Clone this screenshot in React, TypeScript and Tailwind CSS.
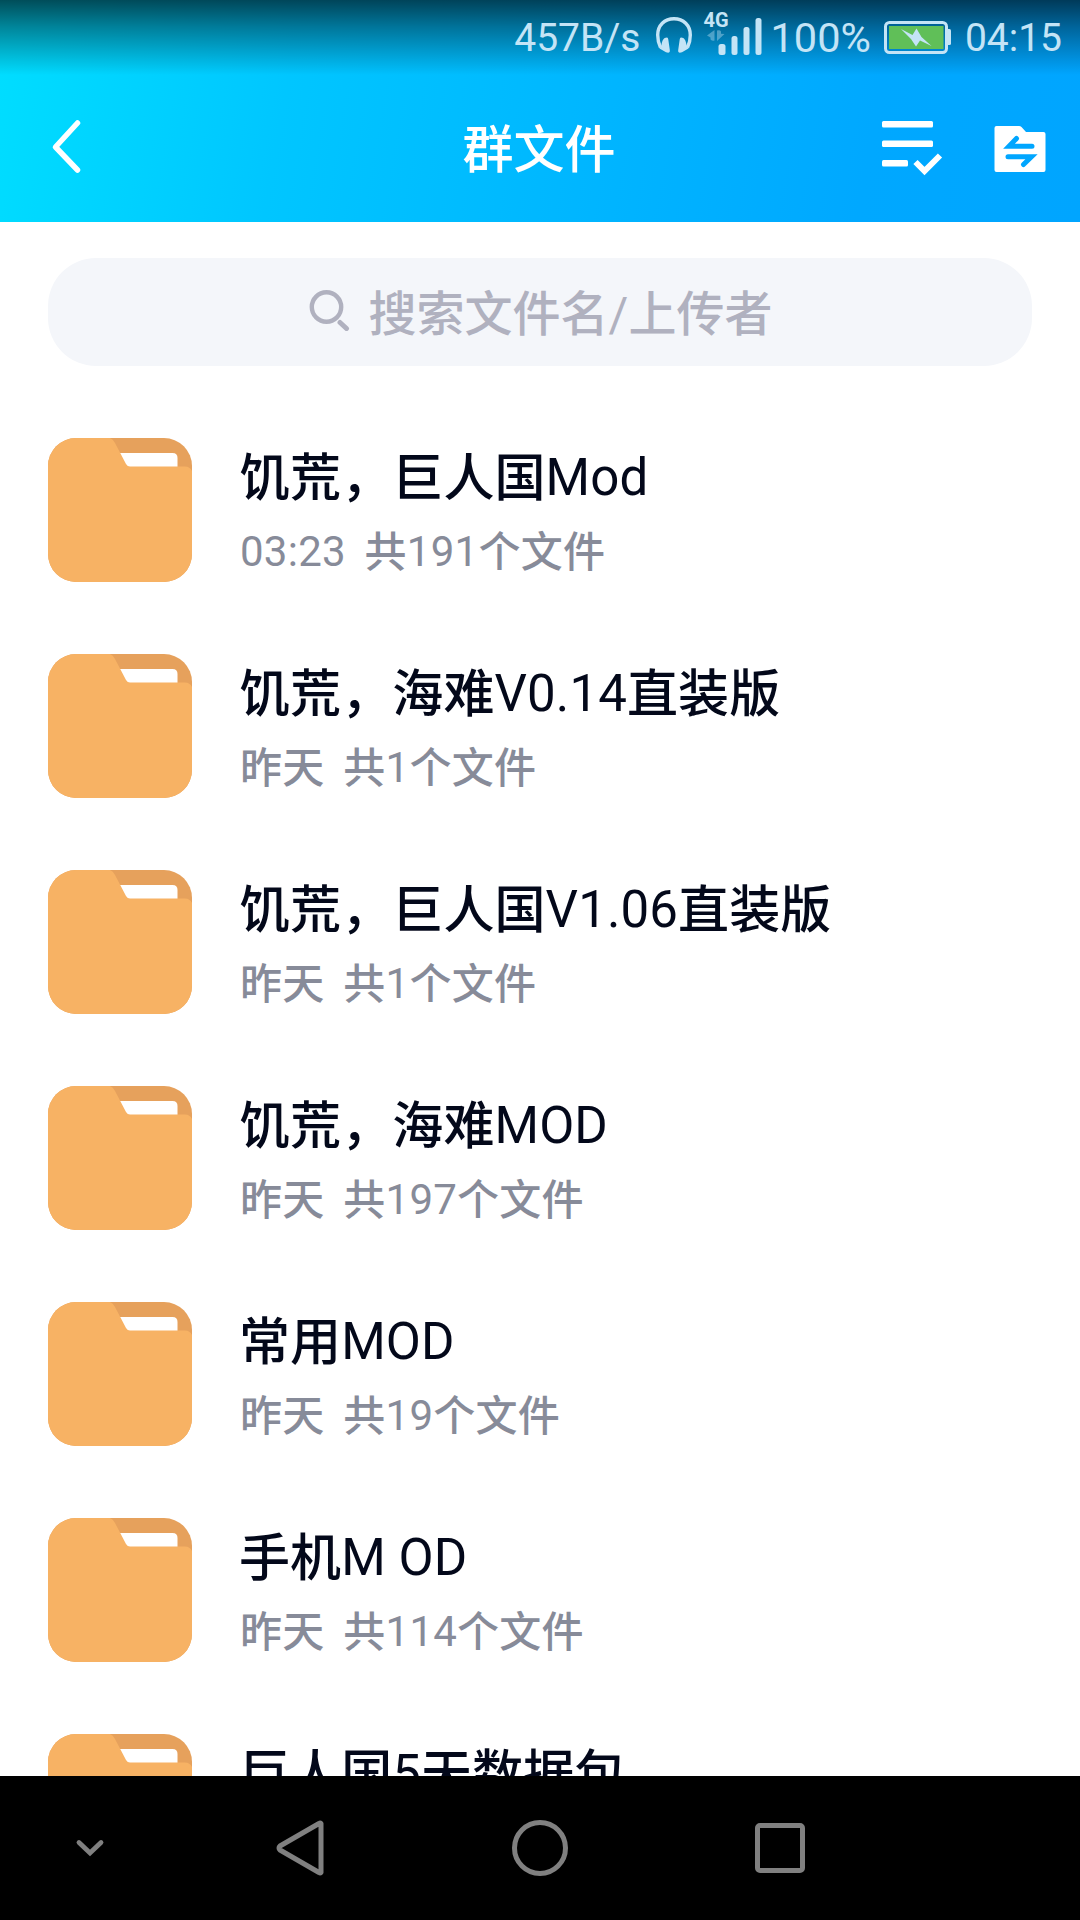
import React from "react";

type FolderEntry = { name: string; date: string; count?: number };

const folders: FolderEntry[] = [
  { name: "饥荒，巨人国Mod", date: "03:23", count: 191 },
  { name: "饥荒，海难V0.14直装版", date: "昨天", count: 1 },
  { name: "饥荒，巨人国V1.06直装版", date: "昨天", count: 1 },
  { name: "饥荒，海难MOD", date: "昨天", count: 197 },
  { name: "常用MOD", date: "昨天", count: 19 },
  { name: "手机M OD", date: "昨天", count: 114 },
  { name: "巨人国5天数据包", date: "昨天" },
];

function Headphones() {
  return (
    <svg width="38" height="38" viewBox="0 0 38 38" className="ml-[14px] mt-[16px] shrink-0">
      <path d="M5.500 31.500C3.500 27.500 2.700 23.500 2.700 19C2.700 9.500 9.500 2.700 19 2.700S35.300 9.500 35.300 19C35.300 23.500 34.500 27.500 32.500 31.500" fill="none" stroke="currentColor" strokeWidth="3.400" />
      <path d="M12 21.500C8.500 21.500 7 25 6.500 29L4.500 32.500L11 36.300Q15.300 37.800 14.800 34L13.300 23.500Q13 21.500 12 21.500z" fill="currentColor" />
      <path d="M26 21.500C29.500 21.500 31 25 31.500 29L33.500 32.500L27 36.300Q22.700 37.800 23.200 34L24.700 23.500Q25 21.500 26 21.500z" fill="currentColor" />
    </svg>
  );
}

function Signal() {
  return (
    <div className="relative ml-[11px] h-[60px] w-[60px] shrink-0">
      <span className="absolute left-0 top-[10px] text-[20px] font-bold leading-[20px]">4G</span>
      <svg width="60" height="60" viewBox="0 0 60 60" className="absolute left-0 top-0">
        <g fill="currentColor">
          <rect x="14.500" y="44" width="7" height="11" rx="2.500" />
          <rect x="27.500" y="36" width="6" height="19" rx="2.500" />
          <rect x="39.500" y="27" width="6" height="28" rx="2.500" />
          <rect x="51.500" y="18" width="6" height="37" rx="2.500" />
          <path opacity=".4" d="M10.500 30v10.500q-2 1-4-1v-2L3 35.500zM13 41V30.500q3-1 4 1v2.300l3.500.2z" />
        </g>
      </svg>
    </div>
  );
}

function Battery() {
  return (
    <svg width="68" height="34" viewBox="0 0 68 34" className="ml-[13px] mt-[21px] shrink-0">
      <rect x="1.500" y="1.500" width="61" height="30" rx="4" fill="none" stroke="currentColor" strokeWidth="3" />
      <rect x="5" y="5" width="54.500" height="23" fill="#60bf58" />
      <path d="M64 8h1.500a1.500 1.500 0 0 1 1.500 1.500v13a1.500 1.500 0 0 1-1.500 1.500H64z" fill="currentColor" />
      <path d="M17 8L28.500 14L32.500 7.500L37.500 16L47.500 25L36 19.500L32 25.500L27 18z" fill="currentColor" />
    </svg>
  );
}

function StatusBar() {
  return (
    <div className="flex h-[75px] items-start justify-end bg-linear-to-b from-black/65 via-black/40 via-35% to-transparent pr-[18px] text-[39px] leading-[76px] text-[#c4e4f6]">
      <span>457B/s</span>
      <Headphones />
      <Signal />
      <span className="ml-[7px] text-[41.5px]">100%</span>
      <Battery />
      <span className="ml-[13px]">04:15</span>
    </div>
  );
}

function TitleBar() {
  return (
    <div className="grid h-[147px] grid-cols-3 items-center text-white">
      <svg width="32" height="62" viewBox="0 0 32 62" className="ml-[50px]">
        <path d="M27.500 5L5.500 29L27.500 52" fill="none" stroke="currentColor" strokeWidth="5.500" strokeLinecap="round" strokeLinejoin="round" />
      </svg>
      <h1 className="-ml-[2px] pt-[5px] text-center text-[51px] font-medium leading-[60px]">群文件</h1>
      <div className="flex items-center justify-end gap-[50px] pr-[34px]">
        <svg width="64" height="60" viewBox="0 0 64 60">
          <g fill="currentColor">
            <rect x="2" y="2" width="51" height="6.500" rx="1.500" />
            <rect x="2" y="21.500" width="51" height="6.500" rx="1.500" />
            <rect x="2" y="41" width="26" height="6.500" rx="1.500" />
          </g>
          <path d="M35.500 43L44.500 52L60 36.500" fill="none" stroke="currentColor" strokeWidth="6" />
        </svg>
        <svg width="52" height="48" viewBox="0 0 52 48">
          <path d="M2.500 1H25q1.500 0 2.500 1l4.500 5H49.500q2 0 2 2V45q0 2-2 2H2.500q-2 0-2-2V3q0-2 2-2z" fill="currentColor" />
          <path d="M38 21.300H15L22.500 13.500M14 31.700H37.500L29.500 39.500" fill="none" stroke="#00a6ff" strokeWidth="5" strokeLinecap="round" />
        </svg>
      </div>
    </div>
  );
}

function SearchBox() {
  return (
    <div className="mx-12 mt-9 flex h-[108px] shrink-0 items-center justify-center rounded-[48px] bg-[#f4f6fa] text-[48px] leading-[60px] text-[#b0b1bf]">
      <svg width="42" height="42" viewBox="0 0 42 42" className="mb-[4px] mr-[19px]">
        <circle cx="18.500" cy="18" r="14.700" fill="none" stroke="currentColor" strokeWidth="4.400" />
        <path d="M32 33.500L38.500 39.500" stroke="currentColor" strokeWidth="5" strokeLinecap="round" />
      </svg>
      <span className="pt-[5px] font-medium">
        搜索文件名<span className="font-normal">/</span>上传者
      </span>
    </div>
  );
}

function FolderIcon() {
  return (
    <svg width="144" height="144" viewBox="0 0 144 144" className="shrink-0 rounded-[28px]">
      <rect width="144" height="144" fill="#e6a15c" />
      <path d="M71 15H124.500Q129.500 15 129.500 20V30H71z" fill="#fff" />
      <path d="M0 0H62Q65 1 67 5L78 26Q79.500 28.500 82 28.500H137Q142 28.500 144 33V144H0z" fill="#f7b264" />
    </svg>
  );
}

/* Chinese runs are set in medium weight and sit slightly below the Latin baseline. */
function MixedText({ text }: { text: string }) {
  return (
    <>
      {text.split(/([A-Za-z0-9.: ]+)/).map((part, i) =>
        i % 2 ? (
          <span key={i} className="font-normal">{part}</span>
        ) : (
          <span key={i} className="align-[-1px] font-medium">{part}</span>
        ),
      )}
    </>
  );
}

function FolderRow({ folder }: { folder: FolderEntry }) {
  return (
    <li className="flex h-[216px] shrink-0 items-center gap-[47px] px-12">
      <FolderIcon />
      <div className="h-[144px] whitespace-pre">
        <p className="mt-[8px] h-[64px] text-[51px] leading-[64px] tracking-[0.1px] text-[#03081a]">
          <MixedText text={folder.name} />
        </p>
        <p className="ml-px mt-[14px] h-[56px] text-[42px] leading-[56px] tracking-[0.25px] text-[#878b99] [word-spacing:-1.3px]">
          <MixedText text={folder.count ? `${folder.date}  共${folder.count}个文件` : folder.date} />
        </p>
      </div>
    </li>
  );
}

function NavigationBar() {
  return (
    <nav className="flex h-[144px] shrink-0 items-center bg-black text-[#808080]">
      <svg width="30" height="20" viewBox="0 0 30 20" className="ml-[75px]">
        <path d="M4 4.500L15 15L26 4.500" fill="none" stroke="currentColor" strokeWidth="4.800" strokeLinecap="round" />
      </svg>
      <svg width="52" height="58" viewBox="0 0 52 58" className="ml-[169px]">
        <path d="M47 4.500Q46.500 3.500 45 4.500L6 27Q4 29 6 31L45 53.500Q46.500 54.500 47 53.500z" fill="none" stroke="currentColor" strokeWidth="5" strokeLinejoin="round" />
      </svg>
      <span className="ml-[186px] size-[56px] rounded-full border-[5px] border-[#808080]" />
      <span className="ml-[187px] size-[50px] rounded-[5px] border-[5px] border-[#808080]" />
    </nav>
  );
}

export default function App() {
  return (
    <div className="flex h-[1920px] w-[1080px] flex-col overflow-hidden bg-white font-[Roboto,'Noto_Sans_CJK_SC',sans-serif]">
      <header className="h-[222px] shrink-0 bg-[linear-gradient(100deg,#00deff_0%,#00c6ff_27%,#00b4ff_58%,#00a8ff_80%,#00a5ff_100%)]">
        <StatusBar />
        <TitleBar />
      </header>
      <main className="flex min-h-0 flex-1 flex-col overflow-hidden">
        <SearchBox />
        <ul className="mt-9 flex flex-col">
          {folders.map((folder) => (
            <FolderRow key={folder.name} folder={folder} />
          ))}
        </ul>
      </main>
      <NavigationBar />
    </div>
  );
}
